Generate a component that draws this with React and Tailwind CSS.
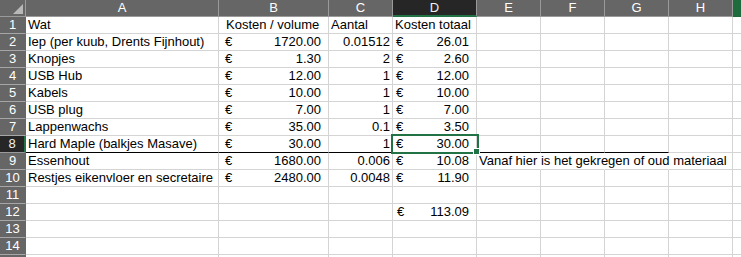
import React from 'react';

// Column widths (including the 1px right gridline) for columns A..H
const colW = ['w-[193px]', 'w-[110px]', 'w-[64px]', 'w-[84px]', 'w-[64px]', 'w-[64px]', 'w-[64px]', 'w-[64px]'];
const letters = ['A', 'B', 'C', 'D', 'E', 'F', 'G', 'H'];

const T = (v, cls = '') => ({ t: 'text', v, cls });
const A = (v, pad) => ({ t: 'acc', v, pad });
const N = (v) => ({ t: 'num', v });

const rows = [
  [T('Wat'), T('Kosten / volume', 'pl-[7px]'), T('Aantal'), T('Kosten totaal')],
  [T('Iep (per kuub, Drents Fijnhout)'), A('1720.00', 'pl-[6px]'), N('0.01512'), A('26.01', 'pl-[3px]')],
  [T('Knopjes'), A('1.30', 'pl-[6px]'), N('2'), A('2.60', 'pl-[3px]')],
  [T('USB Hub'), A('12.00', 'pl-[6px]'), N('1'), A('12.00', 'pl-[3px]')],
  [T('Kabels'), A('10.00', 'pl-[6px]'), N('1'), A('10.00', 'pl-[3px]')],
  [T('USB plug'), A('7.00', 'pl-[6px]'), N('1'), A('7.00', 'pl-[3px]')],
  [T('Lappenwachs'), A('35.00', 'pl-[6px]'), N('0.1'), A('3.50', 'pl-[3px]')],
  [T('Hard Maple (balkjes Masave)'), A('30.00', 'pl-[6px]'), N('1'), A('30.00', 'pl-[3px]')],
  [T('Essenhout'), A('1680.00', 'pl-[6px]'), N('0.006'), A('10.08', 'pl-[3px]'), T('Vanaf hier is het gekregen of oud materiaal', 'spill')],
  [T('Restjes eikenvloer en secretaire'), A('2480.00', 'pl-[6px]'), N('0.0048'), A('11.90', 'pl-[3px]')],
  [],
  [null, null, null, A('113.09', 'pl-[4px]')],
  [],
  [],
  [],
];

function CellContent({ c }) {
  if (!c) return null;
  if (c.t === 'text')
    return <div className={`whitespace-nowrap pl-[2px] ${c.cls}`}>{c.v}</div>;
  if (c.t === 'num')
    return <div className="whitespace-nowrap pr-[2px] text-right">{c.v}</div>;
  return (
    <div className={`flex justify-between whitespace-nowrap pr-[7px] ${c.pad}`}>
      <span>€</span>
      <span>{c.v}</span>
    </div>
  );
}

// Active-cell frame with the fill handle in its lower right corner
function SelectionBox() {
  return (
    <div className="pointer-events-none absolute -left-[2px] -top-[2px] z-10 h-[20px] w-[88px] border-2 border-[#217346]">
      <div className="absolute left-[80px] top-[12px] h-[7px] w-[7px] border border-white bg-[#217346]" />
    </div>
  );
}

export default function App() {
  return (
    <div className="h-[257px] w-[741px] overflow-hidden bg-white font-['Liberation_Sans',Arial,sans-serif] text-[13px] leading-[16px] text-black">
      {/* column header strip */}
      <div className="flex h-[17px]">
        <div className="relative h-[17px] w-[26px] shrink-0 border-b border-r border-[#9a9a9a] bg-[#666666]">
          <svg className="absolute left-[13px] top-[4px]" width="10" height="10" viewBox="0 0 10 10">
            <polygon points="10,0 10,10 0,10" fill="#b8b8b8" />
          </svg>
        </div>
        {letters.map((l, i) =>
          l === 'D' ? (
            <div
              key={l}
              className={`${colW[i]} flex h-[17px] shrink-0 items-start justify-center border-b-2 border-r border-b-[#217346] border-r-[#9a9a9a] bg-[#262626] text-[#f0f0f0]`}
            >
              {l}
            </div>
          ) : (
            <div
              key={l}
              className={`${colW[i]} flex h-[17px] shrink-0 items-start justify-center border-b border-r border-[#9a9a9a] bg-[#666666] text-white`}
            >
              {l}
            </div>
          )
        )}
        <div className="h-[17px] flex-1 bg-[#1e6b3d]" />
      </div>

      {rows.map((r, ri) => {
        const n = ri + 1;
        const sel = n === 8;
        // the last row only peeks in at the bottom edge, so its number stays out of view
        const label = n < rows.length ? n : '';
        return (
          <div key={n} className="flex h-[17px]">
            {sel ? (
              <div className="flex h-[17px] w-[26px] shrink-0 justify-center border-b border-r-2 border-b-[#9a9a9a] border-r-[#217346] bg-[#262626] text-[#f0f0f0]">
                {label}
              </div>
            ) : (
              <div className="flex h-[17px] w-[26px] shrink-0 justify-center overflow-hidden border-b border-r border-b-[#a6a6a6] border-r-[#666666] bg-[#666666] text-white">
                {label}
              </div>
            )}
            {letters.map((l, ci) => {
              const c = r[ci];
              const thick = n === 8 && ci <= 6;
              const noRight = n === 9 && ci >= 4 && ci <= 6;
              const active = sel && l === 'D';
              const spill = c && c.t === 'text' && c.cls === 'spill';
              const bottom = thick ? 'border-b-black' : 'border-b-[#d4d4d4]';
              const right = noRight ? 'border-r-transparent' : 'border-r-[#d4d4d4]';
              const clip = active || spill ? 'overflow-visible' : 'overflow-hidden';
              return (
                <div
                  key={l}
                  className={`${colW[ci]} relative h-[17px] shrink-0 border-b border-r ${bottom} ${right} ${clip}`}
                >
                  <CellContent c={c} />
                  {active && <SelectionBox />}
                </div>
              );
            })}
            <div className="h-[17px] flex-1 border-b border-[#d4d4d4]" />
          </div>
        );
      })}
    </div>
  );
}
